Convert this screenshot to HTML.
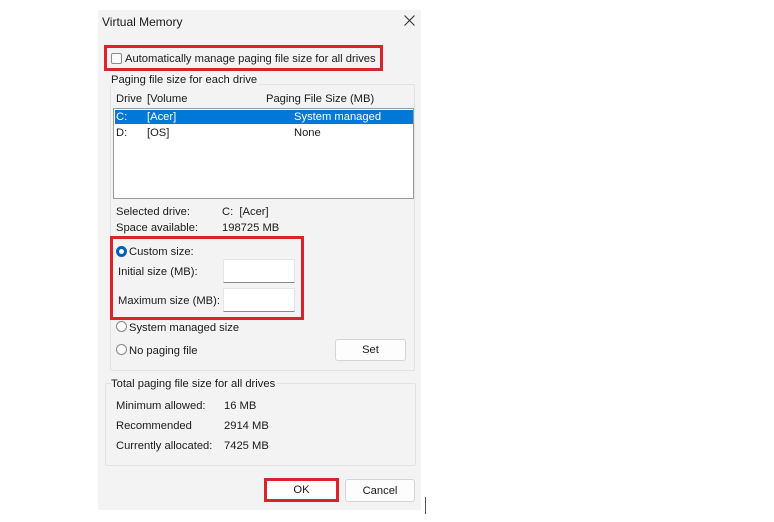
<!DOCTYPE html>
<html><head><meta charset="utf-8"><style>
body{margin:0;width:774px;height:522px;background:#fff;position:relative;overflow:hidden;font-family:"Liberation Sans",sans-serif;font-size:11.2px;color:#1a1a1a}
.a{position:absolute;white-space:nowrap}
.t{margin-top:1px}
.dlg{position:absolute;left:98px;top:10px;width:323px;height:500px;background:#f3f3f3}
.grp{position:absolute;border:1px solid #e2e2e2;border-radius:2px}
.red{position:absolute;border:3px solid #d9232d;box-sizing:border-box}
.inp{position:absolute;background:#fff;border:1px solid #e5e5e5;border-bottom:1px solid #8a8a8a;box-sizing:border-box}
.btn{position:absolute;background:#fdfdfd;border:1px solid #d5d5d5;border-radius:3px;box-sizing:border-box;text-align:center}
.rad{position:absolute;width:11px;height:11px;border:1px solid #8a8a8a;border-radius:50%;background:#fafafa;box-sizing:border-box}
</style></head><body>
<div class="dlg"></div>
<div class="a t" style="left:102px;top:14px;font-size:12px">Virtual Memory</div>
<svg class="a" style="left:404px;top:15px" width="11" height="11" viewBox="0 0 11 11"><path d="M0.5 0.5L10.5 10.5M10.5 0.5L0.5 10.5" stroke="#333" stroke-width="1.1"/></svg>

<div class="red" style="left:104px;top:45px;width:279px;height:26px"></div>
<div class="a" style="left:111px;top:53px;width:11px;height:11px;border:1px solid #8a8a8a;border-radius:2px;box-sizing:border-box;background:#fafafa"></div>
<div class="a t" style="left:125px;top:52px">Automatically manage paging file size for all drives</div>

<div class="grp" style="left:110px;top:84px;width:303px;height:285px"></div>
<div class="a t" style="left:111px;top:73px;background:#f3f3f3;padding-right:2px">Paging file size for each drive</div>
<div class="a t" style="left:116px;top:92px">Drive</div>
<div class="a t" style="left:147px;top:92px">[Volume</div>
<div class="a t" style="left:266px;top:92px">Paging File Size (MB)</div>
<div class="a" style="left:113px;top:108px;width:301px;height:91px;background:#fff;border:1px solid #9a9a9a;box-sizing:border-box"></div>
<div class="a" style="left:115px;top:110px;width:298px;height:14px;background:#0078d7"></div>
<div class="a" style="left:116px;top:111px;color:#fff">C:</div>
<div class="a" style="left:147px;top:111px;color:#fff">[Acer]</div>
<div class="a" style="left:294px;top:111px;color:#fff">System managed</div>
<div class="a t" style="left:116px;top:126px">D:</div>
<div class="a t" style="left:147px;top:126px">[OS]</div>
<div class="a t" style="left:294px;top:126px">None</div>

<div class="a t" style="left:116px;top:205px">Selected drive:</div>
<div class="a t" style="left:222px;top:205px">C:&nbsp; [Acer]</div>
<div class="a t" style="left:116px;top:221px">Space available:</div>
<div class="a t" style="left:222px;top:221px">198725 MB</div>

<div class="red" style="left:110px;top:236px;width:194px;height:84px"></div>
<div class="a" style="left:116px;top:246px;width:11px;height:11px;border-radius:50%;border:3px solid #005fb8;box-sizing:border-box;background:#fff"></div>
<div class="a t" style="left:129px;top:245px">Custom size:</div>
<div class="a t" style="left:118px;top:265px">Initial size (MB):</div>
<div class="inp" style="left:223px;top:259px;width:72px;height:24px"></div>
<div class="a t" style="left:118px;top:294px">Maximum size (MB):</div>
<div class="inp" style="left:223px;top:288px;width:72px;height:24px"></div>
<div class="rad" style="left:116px;top:321px"></div>
<div class="a t" style="left:129px;top:321px">System managed size</div>
<div class="rad" style="left:116px;top:344px"></div>
<div class="a t" style="left:129px;top:344px">No paging file</div>
<div class="btn" style="left:335px;top:339px;width:71px;height:22px;line-height:20px">Set</div>

<div class="grp" style="left:105px;top:383px;width:309px;height:81px"></div>
<div class="a t" style="left:111px;top:377px;background:#f3f3f3;padding-right:2px">Total paging file size for all drives</div>
<div class="a t" style="left:116px;top:399px">Minimum allowed:</div>
<div class="a t" style="left:224px;top:399px">16 MB</div>
<div class="a t" style="left:116px;top:419px">Recommended</div>
<div class="a t" style="left:224px;top:419px">2914 MB</div>
<div class="a t" style="left:116px;top:439px">Currently allocated:</div>
<div class="a t" style="left:224px;top:439px">7425 MB</div>

<div class="btn" style="left:264px;top:478px;width:75px;height:24px;border:3px solid #d9232d;border-radius:0;line-height:19px;background:#fff">OK</div>
<div class="btn" style="left:345px;top:479px;width:70px;height:23px;line-height:22px">Cancel</div>
<div class="a" style="left:425px;top:497px;width:1px;height:17px;background:#555"></div>
</body></html>
